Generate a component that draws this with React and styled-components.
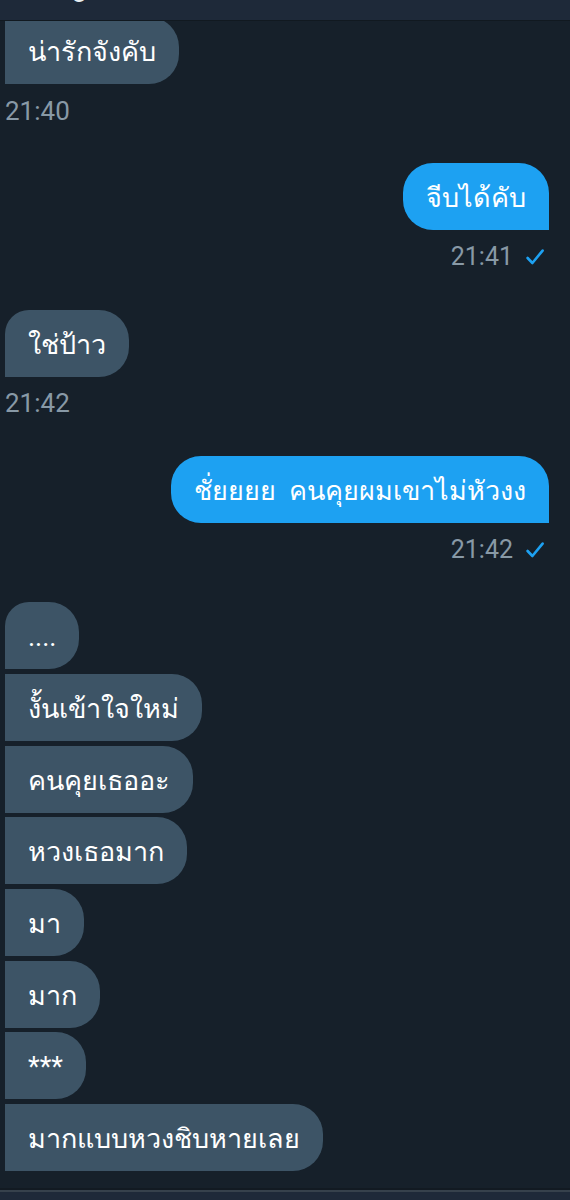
import React from "react";
import styled, { createGlobalStyle, css } from "styled-components";

const GlobalStyle = createGlobalStyle`
  html, body {
    margin: 0;
    padding: 0;
    background: #16202a;
  }
  * { box-sizing: border-box; }
`;

const Page = styled.div`
  width: 570px;
  height: 1200px;
  display: flex;
  flex-direction: column;
  background: #16202a;
  font-family: Roboto, "Noto Sans", "DejaVu Sans", sans-serif;
  overflow: hidden;
`;

const Header = styled.header`
  flex: 0 0 21px;
  background: #1e2939;
  border-bottom: 1px solid #111920;
  overflow: hidden;
`;

const HeaderTitle = styled.div`
  margin-top: -27px;
  padding-left: 72px;
  color: #e6ecf0;
  font-size: 26px;
  line-height: 30px;
`;

const Messages = styled.main`
  flex: 1 1 auto;
  overflow: hidden;
  padding: 0 21px 0 5px;
`;

const Thread = styled.div`
  margin-top: -4px;
  display: flex;
  flex-direction: column;
`;

const Group = styled.section`
  display: flex;
  flex-direction: column;
  align-items: ${(p) => (p.$out ? "flex-end" : "flex-start")};
  gap: 4.7px;
  margin-bottom: 37.6px;
`;

const R = 30;

const Bubble = styled.div`
  height: 67px;
  padding: 2px 23px 0;
  display: flex;
  align-items: center;
  font-size: 27px;
  color: #ffffff;
  white-space: pre;
  background: ${(p) => (p.$out ? "#1da1f2" : "#3d5466")};
  ${(p) =>
    p.$out
      ? css`
          border-radius: ${R}px ${R}px 0 ${R}px;
        `
      : css`
          border-radius: ${p.$first ? 24 : 0}px ${R}px ${R}px 0;
        `}
`;

const Meta = styled.div`
  display: flex;
  align-items: center;
  gap: 13px;
  margin-top: 7px;
  height: 30px;
  padding-right: ${(p) => (p.$out ? "5px" : "0")};
  color: #8899a6;
  font-size: ${(p) => (p.$out ? "25px" : "26px")};
  line-height: 30px;
`;

const Check = styled.svg`
  width: 18px;
  height: 16px;
  display: block;
`;

const Tick = () => (
  <Check viewBox="0 0 18 16" fill="none">
    <path
      d="M1.6 9 L6.4 14 L16.6 1.6"
      stroke="#1da1f2"
      strokeWidth="2.6"
      strokeLinecap="round"
      strokeLinejoin="round"
    />
  </Check>
);

const Footer = styled.footer`
  flex: 0 0 10px;
  background: #1e2939;
  border-top: 2px solid #36414c;
  box-shadow: 0 -2px 0 #121a22;
`;

const thread = [
  { out: false, texts: ["น่ารักจังคับ"], time: "21:40", noFirstRound: true },
  { out: true, texts: ["จีบได้คับ"], time: "21:41" },
  { out: false, texts: ["ใช่ป้าว"], time: "21:42" },
  { out: true, texts: ["ชั่ยยยย  คนคุยผมเขาไม่หัวงง"], time: "21:42" },
  {
    out: false,
    texts: [
      "....",
      "งั้นเข้าใจใหม่",
      "คนคุยเธออะ",
      "หวงเธอมาก",
      "มา",
      "มาก",
      "***",
      "มากแบบหวงชิบหายเลย",
    ],
    time: "21:43",
  },
];

export default function App() {
  return (
    <>
      <GlobalStyle />
      <Page>
        <Header>
          <HeaderTitle>g</HeaderTitle>
        </Header>
        <Messages>
          <Thread>
            {thread.map((g, i) => (
              <Group key={i} $out={g.out}>
                {g.texts.map((t, j) => (
                  <Bubble key={j} $out={g.out} $first={j === 0 && !g.noFirstRound}>
                    {t}
                  </Bubble>
                ))}
                <Meta $out={g.out}>
                  <span>{g.time}</span>
                  {g.out && <Tick />}
                </Meta>
              </Group>
            ))}
          </Thread>
        </Messages>
        <Footer />
      </Page>
    </>
  );
}
